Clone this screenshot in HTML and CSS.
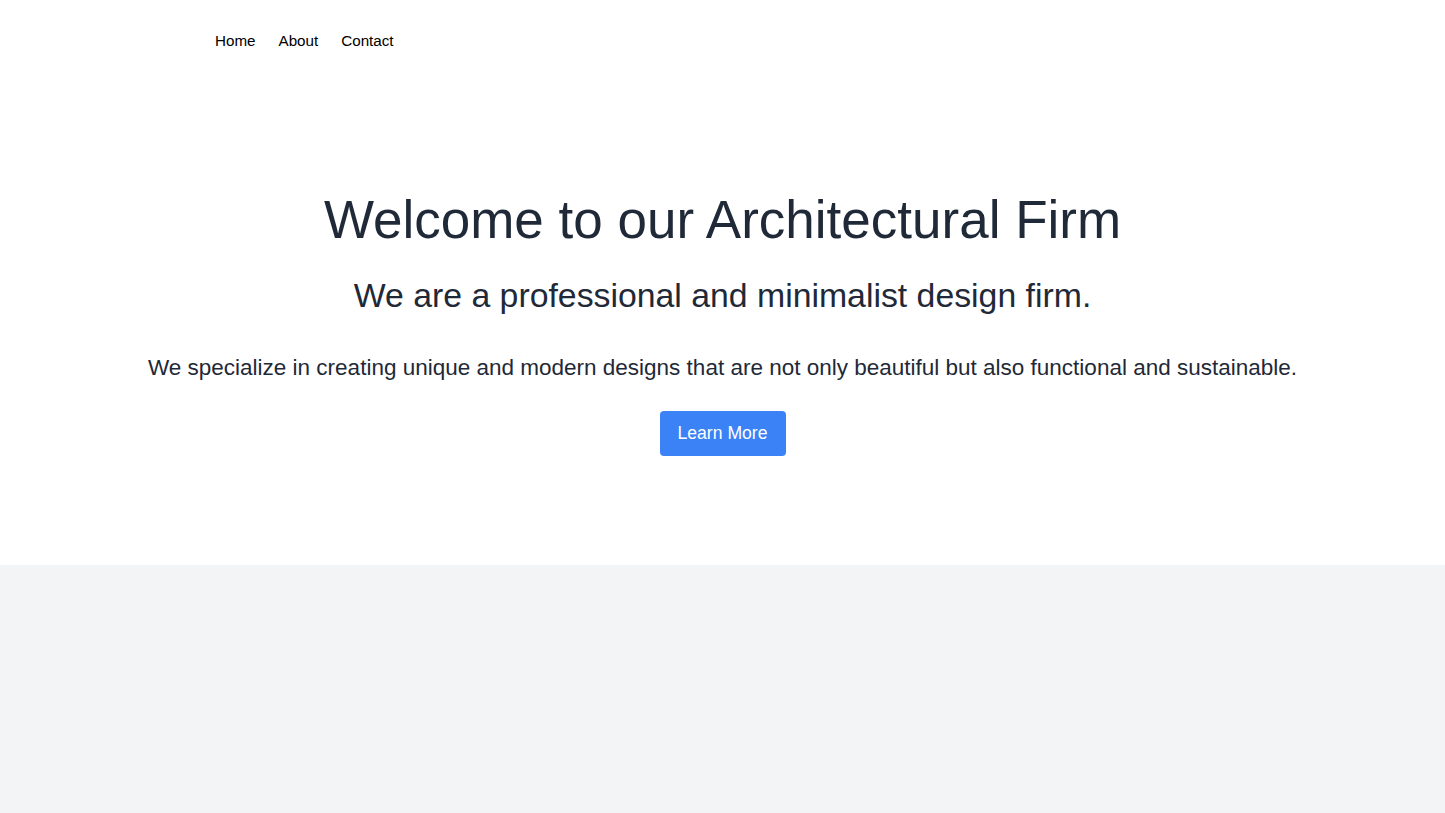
FILE: index.html
```html
<!DOCTYPE html>
<html lang="en">
<head>
<meta charset="utf-8">
<title>Architectural Firm</title>
<link rel="stylesheet" href="styles.css">
</head>
<body>
<div class="page">
  <header class="header">
    <nav class="nav">
      <a href="#" class="nav-link">Home</a>
      <a href="#" class="nav-link">About</a>
      <a href="#" class="nav-link">Contact</a>
    </nav>
  </header>
  <section class="hero">
    <h1 class="hero-title">Welcome to our Architectural Firm</h1>
    <h2 class="hero-subtitle">We are a professional and minimalist design firm.</h2>
    <p class="hero-text">We specialize in creating unique and modern designs that are not only beautiful but also functional and sustainable.</p>
    <a href="#" class="btn">Learn More</a>
  </section>
</div>
</body>
</html>
```
FILE: styles.css
```css
html, body {
  margin: 0;
  padding: 0;
}
body {
  background: #f3f4f6;
  font-family: "Liberation Sans", Arial, sans-serif;
  color: #1f2937;
  min-height: 813px;
}
.page {
  background: #ffffff;
}
.header {
  padding: 32px 0 32px 215px;
}
.nav {
  display: flex;
  gap: 23px;
}
.nav-link {
  color: #000000;
  text-decoration: none;
  font-size: 15.2px;
  line-height: 18px;
}
.hero {
  display: flex;
  flex-direction: column;
  align-items: center;
  text-align: center;
  padding: 111px 0 109px;
}
.hero-title {
  margin: 0;
  font-size: 53px;
  line-height: 53px;
  font-weight: 400;
  color: #1f2937;
}
.hero-subtitle {
  margin: 33px 0 0;
  font-size: 33.8px;
  line-height: 33px;
  font-weight: 400;
  color: #1f2937;
}
.hero-text {
  margin: 42px 0 0;
  font-size: 22.5px;
  line-height: 28px;
  color: #1f2937;
}
.btn {
  margin-top: 29px;
  display: flex;
  align-items: center;
  justify-content: center;
  width: 126px;
  height: 45px;
  box-sizing: border-box;
  background: #3b82f6;
  color: #ffffff;
  border-radius: 4px;
  text-decoration: none;
  font-size: 17.6px;
}
```
